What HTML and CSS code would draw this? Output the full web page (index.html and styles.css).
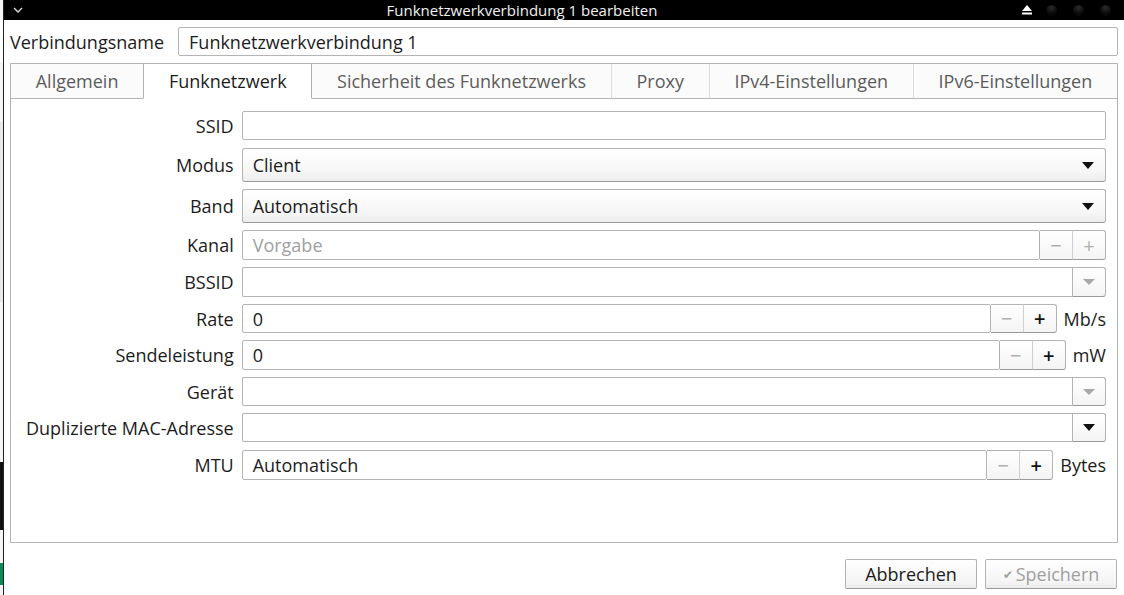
FILE: index.html
```html
<!DOCTYPE html>
<html lang="de">
<head>
    <meta charset="UTF-8">
    <title>Funknetzwerkverbindung 1 bearbeiten</title>
    <link rel="stylesheet" href="styles.css">
</head>
<body>
    <div class="desk">
        <div class="behind">
            <span class="bit b1"></span>
            <span class="bit b2"></span>
            <span class="bit b3"></span>
            <span class="bit b4"></span>
        </div>

        <div class="window">
            <div class="titlebar">
                <span class="title-menu">
                    <svg width="10" height="6" viewBox="0 0 10 6"><path d="M1 1l4 4 4-4" fill="none" stroke="#ddd" stroke-width="1.4"/></svg>
                </span>
                <span class="title-text">Funknetzwerkverbindung 1 bearbeiten</span>
                <span class="title-buttons">
                    <svg class="eject" width="12" height="10" viewBox="0 0 12 10"><path d="M6 0l5 6H1z" fill="#fff"/><rect x="1" y="7.5" width="10" height="2" fill="#fff"/></svg>
                    <span class="dot"></span>
                    <span class="dot"></span>
                    <span class="dot"></span>
                </span>
            </div>

            <div class="dialog">
                <div class="name-row">
                    <label>Verbindungsname</label>
                    <div class="entry name-entry">Funknetzwerkverbindung 1</div>
                </div>

                <div class="notebook">
                    <div class="tabs">
                        <div class="tab">Allgemein</div>
                        <div class="tab active">Funknetzwerk</div>
                        <div class="tab">Sicherheit des Funknetzwerks</div>
                        <div class="tab">Proxy</div>
                        <div class="tab">IPv4-Einstellungen</div>
                        <div class="tab">IPv6-Einstellungen</div>
                    </div>

                    <div class="page">
                        <div class="form">
                            <label>SSID</label>
                            <div class="entry short first"></div>

                            <label class="tall">Modus</label>
                            <div class="combo">Client<span class="arrow"></span></div>

                            <label class="tall">Band</label>
                            <div class="combo">Automatisch<span class="arrow"></span></div>

                            <label>Kanal</label>
                            <div class="field">
                                <div class="entry placeholder">Vorgabe</div>
                                <div class="spin disabled"><span>&minus;</span><span>+</span></div>
                            </div>

                            <label>BSSID</label>
                            <div class="field">
                                <div class="entry joined"></div>
                                <div class="drop disabled"><span class="arrow"></span></div>
                            </div>

                            <label>Rate</label>
                            <div class="field short">
                                <div class="entry">0</div>
                                <div class="spin"><span class="off">&minus;</span><span>+</span></div>
                                <span class="unit">Mb/s</span>
                            </div>

                            <label>Sendeleistung</label>
                            <div class="field">
                                <div class="entry">0</div>
                                <div class="spin"><span class="off">&minus;</span><span>+</span></div>
                                <span class="unit">mW</span>
                            </div>

                            <label>Gerät</label>
                            <div class="field short">
                                <div class="entry joined"></div>
                                <div class="drop disabled"><span class="arrow"></span></div>
                            </div>

                            <label>Duplizierte MAC-Adresse</label>
                            <div class="field short">
                                <div class="entry joined"></div>
                                <div class="drop"><span class="arrow"></span></div>
                            </div>

                            <label class="last">MTU</label>
                            <div class="field last">
                                <div class="entry">Automatisch</div>
                                <div class="spin"><span class="off">&minus;</span><span>+</span></div>
                                <span class="unit">Bytes</span>
                            </div>
                        </div>
                    </div>
                </div>

                <div class="actions">
                    <button class="btn">Abbrechen</button>
                    <button class="btn" disabled><span class="check">&#10004;</span>Speichern</button>
                </div>
            </div>
        </div>
    </div>
</body>
</html>
```

FILE: styles.css
```css
:root {
    --text: #1c1c1c;
    --muted: #5c5c5c;
    --faint: #a0a0a0;
    --border: #b4b4b4;
    --border-dark: #9a9a9a;
    --bg: #ffffff;
}

* {
    box-sizing: border-box;
    margin: 0;
    padding: 0;
}

body {
    font-family: 'Open Sans', 'Noto Sans', sans-serif;
    font-size: 18px;
    color: var(--text);
    background: #fff;
    width: 1124px;
    height: 595px;
    overflow: hidden;
}

.desk {
    display: flex;
    height: 595px;
}

/* sliver of the window behind */
.behind {
    width: 4px;
    flex: none;
    background: #f4f4f4;
    border-right: 1px solid #222;
    display: flex;
    flex-direction: column;
}

.bit {
    display: block;
    width: 3px;
}

.b1 { height: 42px; margin-top: 20px; background: #fff; }
.b2 { height: 180px; margin-top: 60px; background: #e8e8e8; }
.b3 { height: 68px; margin-top: 160px; background: #111; }
.b4 { height: 22px; margin-top: 33px; background: #0a8a55; }

.window {
    flex: 1;
    display: flex;
    flex-direction: column;
    background: var(--bg);
}

.titlebar {
    height: 20px;
    background: #000;
    color: #f0f0f0;
    display: flex;
    align-items: center;
    font-size: 15px;
}

.title-menu {
    width: 28px;
    flex: none;
    display: flex;
    justify-content: center;
}

.title-text {
    flex: 1;
    text-align: center;
    white-space: nowrap;
}

.title-buttons {
    width: 112px;
    flex: none;
    display: flex;
    align-items: center;
    justify-content: flex-end;
    gap: 16px;
    padding-right: 13px;
}

.eject {
    margin-right: -3px;
}

.dot {
    width: 11px;
    height: 11px;
    border-radius: 50%;
    background: radial-gradient(circle at 50% 25%, #2a2a2a, #070707 65%);
}

.dialog {
    flex: 1;
    display: flex;
    flex-direction: column;
    padding: 7px 6px 6px 6px;
}

.name-row {
    display: flex;
    align-items: center;
    gap: 14px;
}

.name-row label {
    white-space: nowrap;
}

.entry {
    height: 30px;
    border: 1px solid var(--border);
    border-radius: 2px;
    background: #fff;
    padding: 0 10px;
    display: flex;
    align-items: center;
    white-space: nowrap;
}

.entry.short,
.field.short .entry,
.field.short .drop,
.field.short .spin span {
    height: 29px;
}

.entry.first {
    margin-bottom: 1px;
}

.form .last {
    margin-top: 1px;
}

.name-entry {
    flex: 1;
    height: 29px;
}

.notebook {
    margin-top: 7px;
    height: 480px;
    border: 1px solid var(--border);
    display: flex;
    flex-direction: column;
}

.tabs {
    display: flex;
    height: 35px;
    flex: none;
}

.tab {
    flex: 1 1 auto;
    padding: 0 22px;
    display: flex;
    align-items: center;
    justify-content: center;
    color: var(--muted);
    white-space: nowrap;
    background: #fbfbfb;
    border-bottom: 1px solid var(--border);
    border-left: 1px solid #dcdcdc;
}

.tab:first-child {
    border-left: none;
}

.tab.active {
    color: var(--text);
    background: #fff;
    border-bottom-color: transparent;
    border-left-color: var(--border);
    border-right: 1px solid var(--border);
}

.tab.active + .tab {
    border-left: none;
}

.page {
    flex: 1;
    padding: 12px 11px 0 15px;
}

.form {
    display: grid;
    grid-template-columns: auto 1fr;
    column-gap: 8px;
    row-gap: 7px;
    align-items: center;
}

.form label {
    text-align: right;
    white-space: nowrap;
}

.combo {
    height: 34px;
    border: 1px solid var(--border);
    border-bottom-color: var(--border-dark);
    border-radius: 3px;
    background: linear-gradient(#ffffff, #f6f6f6 70%, #ededed);
    display: flex;
    align-items: center;
    padding: 0 10px;
}

.arrow {
    margin-left: auto;
    width: 0;
    height: 0;
    border-left: 6px solid transparent;
    border-right: 6px solid transparent;
    border-top: 7px solid #111;
    margin-right: 1px;
}

.field {
    display: flex;
    align-items: center;
}

.field .entry {
    flex: 1;
    min-width: 0;
}

.entry.joined {
    border-right: none;
    border-radius: 2px 0 0 2px;
}

.placeholder {
    color: var(--faint);
}

.drop {
    width: 34px;
    height: 30px;
    border: 1px solid var(--border);
    border-bottom-color: var(--border-dark);
    border-radius: 0 3px 3px 0;
    background: linear-gradient(#ffffff, #f4f4f4);
    display: flex;
    align-items: center;
    justify-content: center;
}

.drop .arrow {
    margin: 0;
}

.drop.disabled .arrow {
    border-top-color: #a8a8a8;
    border-top-width: 6px;
}

.spin {
    display: flex;
}

.spin span {
    width: 33px;
    height: 30px;
    border: 1px solid var(--border);
    border-bottom-color: var(--border-dark);
    background: linear-gradient(#ffffff, #f4f4f4);
    display: flex;
    align-items: center;
    justify-content: center;
    font-size: 20px;
    font-weight: 600;
    color: #111;
}

.spin span:first-child {
    border-left: none;
    border-right: 1px solid #cfcfcf;
}

.spin span:last-child {
    border-left: none;
    border-radius: 0 3px 3px 0;
}

.spin span.off,
.spin.disabled span {
    color: #b0b0b0;
    font-weight: 400;
}

.unit {
    margin-left: 7px;
    white-space: nowrap;
}

.actions {
    margin-top: auto;
    display: flex;
    justify-content: flex-end;
    gap: 8px;
    padding-right: 1px;
}

.btn {
    font: inherit;
    width: 132px;
    height: 30px;
    border: 1px solid var(--border);
    border-bottom-color: var(--border-dark);
    border-radius: 2px;
    background: linear-gradient(#ffffff, #f4f4f4 80%, #ebebeb);
    color: var(--text);
    display: flex;
    align-items: center;
    justify-content: center;
}

.btn:disabled {
    color: var(--faint);
}

.check {
    font-size: 12px;
    margin-right: 3px;
}
```
